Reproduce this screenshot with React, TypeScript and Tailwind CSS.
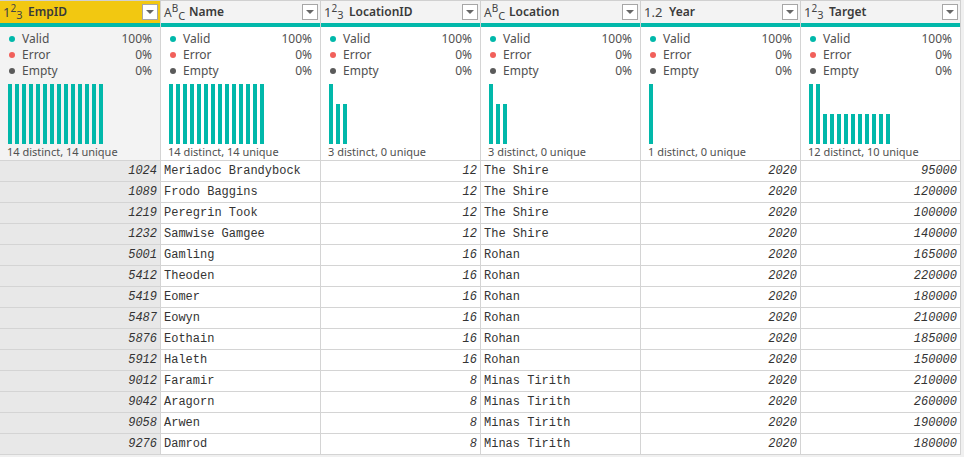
import React from "react";

type Col = {
  name: string;
  type: "int" | "text" | "dec";
  distinct: string;
  bars: number[];
  selected?: boolean;
};

const columns: Col[] = [
  { name: "EmpID", type: "int", distinct: "14 distinct, 14 unique", bars: Array(14).fill(1), selected: true },
  { name: "Name", type: "text", distinct: "14 distinct, 14 unique", bars: Array(14).fill(1) },
  { name: "LocationID", type: "int", distinct: "3 distinct, 0 unique", bars: [1, 0.67, 0.67] },
  { name: "Location", type: "text", distinct: "3 distinct, 0 unique", bars: [1, 0.67, 0.67] },
  { name: "Year", type: "dec", distinct: "1 distinct, 0 unique", bars: [1] },
  { name: "Target", type: "int", distinct: "12 distinct, 10 unique", bars: [1, 1, ...Array(10).fill(0.5)] },
];

const rows: (string | number)[][] = [
  [1024, "Meriadoc Brandybock", 12, "The Shire", 2020, 95000],
  [1089, "Frodo Baggins", 12, "The Shire", 2020, 120000],
  [1219, "Peregrin Took", 12, "The Shire", 2020, 100000],
  [1232, "Samwise Gamgee", 12, "The Shire", 2020, 140000],
  [5001, "Gamling", 16, "Rohan", 2020, 165000],
  [5412, "Theoden", 16, "Rohan", 2020, 220000],
  [5419, "Eomer", 16, "Rohan", 2020, 180000],
  [5487, "Eowyn", 16, "Rohan", 2020, 210000],
  [5876, "Eothain", 16, "Rohan", 2020, 185000],
  [5912, "Haleth", 16, "Rohan", 2020, 150000],
  [9012, "Faramir", 8, "Minas Tirith", 2020, 210000],
  [9042, "Aragorn", 8, "Minas Tirith", 2020, 260000],
  [9058, "Arwen", 8, "Minas Tirith", 2020, 190000],
  [9276, "Damrod", 8, "Minas Tirith", 2020, 180000],
];

function TypeIcon({ type }: { type: Col["type"] }) {
  if (type === "int")
    return (
      <span className="flex items-start text-[13px] leading-none text-[#444] w-[22px] h-[16px]">
        <span className="mt-[2px]">1</span>
        <span className="text-[10px] mt-[-1px]">2</span>
        <span className="text-[11px] mt-[5px]">3</span>
      </span>
    );
  if (type === "text")
    return (
      <span className="flex items-start text-[12px] leading-none text-[#444] w-[22px] h-[16px]">
        <span className="mt-[3px]">A</span>
        <span className="text-[10px] mt-[-1px]">B</span>
        <span className="text-[11px] mt-[6px]">C</span>
      </span>
    );
  return <span className="text-[13px] leading-none text-[#444] w-[22px]">1.2</span>;
}

function Dropdown() {
  return (
    <div className="ml-auto w-[16px] h-[16px] bg-white border border-[#a6a6a6] flex items-center justify-center">
      <div className="w-0 h-0 border-l-[4px] border-r-[4px] border-t-[4px] border-l-transparent border-r-transparent border-t-[#666]" />
    </div>
  );
}

function StatLine({ dot, label, value }: { dot: string; label: string; value: string }) {
  return (
    <div className="flex items-center h-[16px] text-[12px] text-[#505050]">
      <span className={`w-[6px] h-[6px] rounded-full ${dot} ml-[1px] mr-[7px]`} />
      <span>{label}</span>
      <span className="ml-auto">{value}</span>
    </div>
  );
}

export default function App() {
  const widths = ["w-[161px]", "w-[160px]", "w-[160px]", "w-[160px]", "w-[160px]", "w-[160px]"];
  return (
    <div className="w-[964px] h-[457px] bg-[#f0f0f0] overflow-hidden" style={{ fontFamily: '"Noto Sans", "Open Sans", sans-serif' }}>
      <div className="w-[961px] bg-white">
        {/* header */}
        <div className="flex border-t border-[#d0d0d0]">
          {columns.map((c, i) => (
            <div
              key={c.name}
              className={`${widths[i]} h-[22px] flex items-center pl-[3px] pr-[2px] border-r border-[#d0d0d0] ${c.selected ? "bg-[#f2c811]" : "bg-[#f3f3f3]"}`}
            >
              <TypeIcon type={c.type} />
              <span className="text-[12px] font-semibold text-[#3a3a3a] ml-[3px]">{c.name}</span>
              <Dropdown />
            </div>
          ))}
        </div>
        {/* quality bar */}
        <div className="flex">
          {columns.map((c, i) => (
            <div key={c.name} className={`${widths[i]} h-[4px] bg-[#01b8aa] border-r border-[#d0d0d0]`} />
          ))}
        </div>
        {/* profile */}
        <div className="flex border-b border-[#d4d4d4]">
          {columns.map((c, i) => (
            <div
              key={c.name}
              className={`${widths[i]} h-[133px] pt-[4px] pl-[8px] pr-[8px] border-r border-[#d4d4d4] flex flex-col ${c.selected ? "bg-[#f3f3f3]" : "bg-white"}`}
            >
              <StatLine dot="bg-[#01b8aa]" label="Valid" value="100%" />
              <StatLine dot="bg-[#f1605b]" label="Error" value="0%" />
              <StatLine dot="bg-[#5a5a5a]" label="Empty" value="0%" />
              <div className="mt-[5px] h-[60px] flex items-end gap-[3px]">
                {c.bars.map((b, k) => (
                  <div key={k} className="w-[4px] bg-[#01b8aa]" style={{ height: `${Math.round(b * 60)}px` }} />
                ))}
              </div>
              <div className="mt-[1px] text-[11px] leading-[14px] text-[#505050] -ml-[1px]">{c.distinct}</div>
            </div>
          ))}
        </div>
        {/* rows */}
        {rows.map((r, ri) => (
          <div key={ri} className="flex border-b border-[#d4d4d4]">
            {r.map((v, ci) => {
              const c = columns[ci];
              const num = typeof v === "number";
              return (
                <div
                  key={ci}
                  className={`${widths[ci]} h-[20px] flex items-center border-r border-[#d4d4d4] text-[12px] text-[#333] ${
                    c.selected ? "bg-[#e8e8e8]" : "bg-white"
                  } ${num ? "justify-end pr-[3px] italic" : "pl-[3px]"}`}
                  style={{ fontFamily: '"Liberation Mono", "Courier New", monospace' }}
                >
                  {v}
                </div>
              );
            })}
          </div>
        ))}
      </div>
    </div>
  );
}
